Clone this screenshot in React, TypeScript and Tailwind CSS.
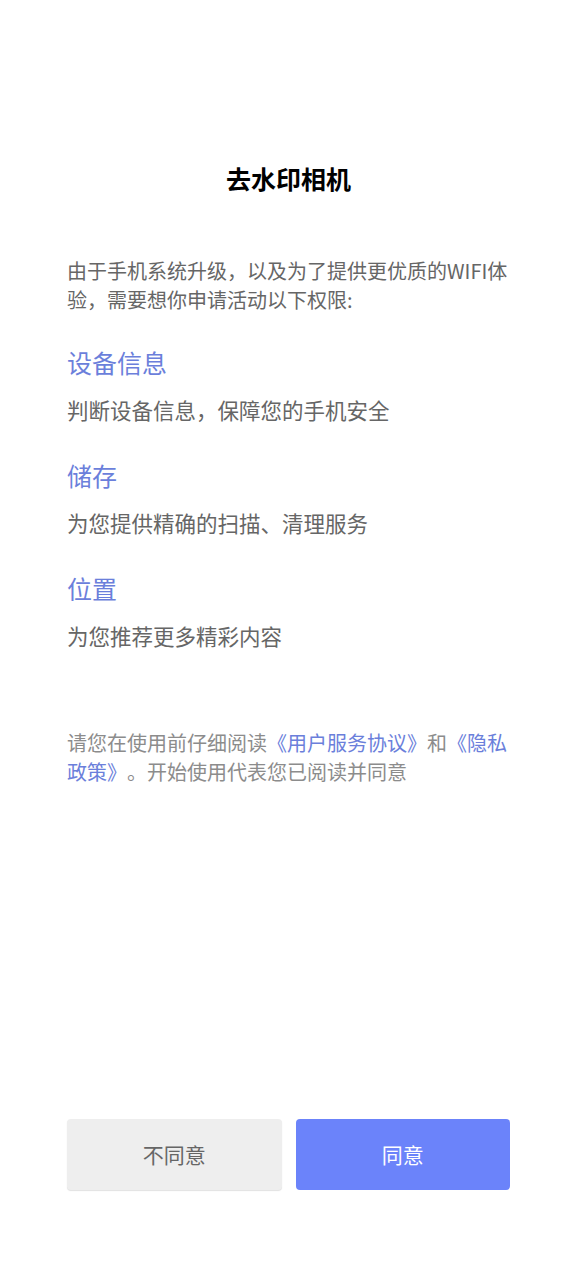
export default function App() {
  const font = { fontFamily: '"Noto Sans CJK SC", "Noto Sans", sans-serif' };

  const items = [
    { title: "设备信息", desc: "判断设备信息，保障您的手机安全" },
    { title: "储存", desc: "为您提供精确的扫描、清理服务" },
    { title: "位置", desc: "为您推荐更多精彩内容" },
  ];

  return (
    <div style={font} className="min-h-screen bg-white flex flex-col pl-[67px] pr-[66px] pt-[160px] pb-[90px]">
      <h1 className="text-center text-[25px] leading-[36px] font-bold text-black">去水印相机</h1>

      <p className="mt-[60px] text-[20px] leading-[29px] text-[#666666]">
        由于手机系统升级，以及为了提供更优质的WIFI体验，需要想你申请活动以下权限:
      </p>

      <div className="flex flex-col">
        {items.map((it, i) => (
          <div key={it.title} className={i === 0 ? "mt-[30px]" : "mt-[32px]"}>
            <div className="text-[25px] leading-[36px] text-[#6b7fdb]">{it.title}</div>
            <div className="mt-[15px] text-[21.5px] leading-[30px] text-[#666666]">{it.desc}</div>
          </div>
        ))}
      </div>

      <p className="mt-[77px] text-[20px] leading-[29px] text-[#8c8c8c] [text-spacing-trim:space-all]">
        请您在使用前仔细阅读<span className="text-[#6b7fdb]">《用户服务协议》</span>和
        <span className="text-[#6b7fdb]">《隐私政策》</span>。开始使用代表您已阅读并同意
      </p>

      <div className="mt-auto flex gap-[14px]">
        <button className="flex-1 h-[71px] rounded-[4px] bg-[#eeeeee] text-[21px] text-[#666666] shadow-[0_1px_1px_rgba(0,0,0,0.12)]">
          不同意
        </button>
        <button className="flex-1 h-[71px] rounded-[4px] bg-[#6b83fa] text-[21px] text-white">
          同意
        </button>
      </div>
    </div>
  );
}
